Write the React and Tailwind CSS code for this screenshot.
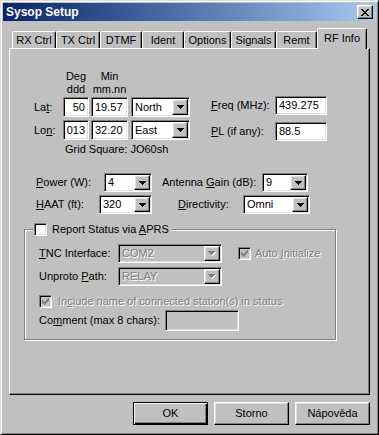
import React from 'react';

// classic 3D borders
const sunken = "border border-t-[#808080] border-l-[#808080] border-b-white border-r-white shadow-[inset_1px_1px_0_#000,inset_-1px_-1px_0_#dfdfdf]";
const raised = "border border-t-white border-l-white border-b-black border-r-black shadow-[inset_-1px_-1px_0_#808080,inset_1px_1px_0_#dfdfdf]";
const dim = "text-[#808080] [text-shadow:1px_1px_0_#fff]";

const ARROW = ["XXXXXXX", ".XXXXX.", "..XXX..", "...X..."];
const CHECK = ["......X", ".....XX", "X...XXX", "XX.XXX.", "XXXXX..", ".XXX...", "..X...."];
const CLOSE = ["XX....XX", ".XX..XX.", "..XXXX..", "...XX...", "..XXXX..", ".XX..XX.", "XX....XX"];

function Pix({ rows, color = "#000", shadow }) {
  const w = rows[0].length + (shadow ? 1 : 0);
  const h = rows.length + (shadow ? 1 : 0);
  const cells = (fill, dx) =>
    rows.flatMap((r, y) =>
      [...r].map((c, x) =>
        c === 'X' ? <rect key={`${fill}-${x}-${y}`} x={x + dx} y={y + dx} width="1" height="1" fill={fill} /> : null
      )
    );
  return (
    <svg width={w} height={h} shapeRendering="crispEdges" className="block">
      {shadow && cells(shadow, 1)}
      {cells(color, 0)}
    </svg>
  );
}

function Edit({ value, className = "", right, disabled }) {
  return (
    <div className={`${sunken} ${disabled ? 'bg-[#c0c0c0]' : 'bg-white'} flex items-center px-[3px] ${right ? 'justify-end' : ''} ${className}`}>
      {value}
    </div>
  );
}

function Combo({ value, className = "", disabled }) {
  return (
    <div className={`${sunken} ${disabled ? 'bg-[#c0c0c0]' : 'bg-white'} flex items-stretch p-[1px] ${className}`}>
      <div className={`flex-1 flex items-center pl-[2px] ${disabled ? dim : ''}`}>{value}</div>
      <div className={`${raised} bg-[#c0c0c0] w-[16px] flex items-center justify-center`}>
        {disabled ? <Pix rows={ARROW} color="#808080" shadow="#fff" /> : <Pix rows={ARROW} />}
      </div>
    </div>
  );
}

function Check({ checked, disabled }) {
  return (
    <div className={`${sunken} ${disabled ? 'bg-[#c0c0c0]' : 'bg-white'} w-[13px] h-[13px] flex items-center justify-center shrink-0`}>
      {checked && <Pix rows={CHECK} color={disabled ? "#808080" : "#000"} />}
    </div>
  );
}

const tabs = [
  ["RX Ctrl", "w-[44px]"],
  ["TX Ctrl", "w-[44px]"],
  ["DTMF", "w-[42px]"],
  ["Ident", "w-[42px]"],
  ["Options", "w-[47px]"],
  ["Signals", "w-[45px]"],
  ["Remt", "w-[41px]"],
];

export default function App() {
  return (
    <div className="w-[379px] h-[435px] bg-[#c0c0c0] p-[2px] border border-t-[#dfdfdf] border-l-[#dfdfdf] border-r-black border-b-black shadow-[inset_1px_1px_0_#fff,inset_-1px_-1px_0_#808080] font-['Liberation_Sans',Arial,sans-serif] text-[11px] text-black leading-[13px] flex flex-col select-none">
      {/* title bar */}
      <div className="h-[18px] bg-linear-to-r from-[#0a246a] to-[#a6caf0] flex items-center pl-[3px] pr-[3px]">
        <span className="text-white font-bold text-[12px] flex-1">Sysop Setup</span>
        <div className={`${raised} bg-[#c0c0c0] w-[16px] h-[14px] flex items-center justify-center`}>
          <Pix rows={CLOSE} />
        </div>
      </div>

      {/* tabs */}
      <div className="mt-[7px] h-[20px] pl-[9px] flex items-end">
        {tabs.map(([t, w]) => (
          <div key={t} className={`${w} h-[17px] border-l border-t border-white border-r border-r-black rounded-t-[2px] shadow-[inset_-1px_0_0_#808080] flex items-center justify-center`}>
            {t}
          </div>
        ))}
        <div className="w-[50px] h-[21px] -mb-px relative z-10 bg-[#c0c0c0] border-l border-t border-white border-r border-r-black rounded-t-[2px] shadow-[inset_-1px_0_0_#808080] flex items-center justify-center pb-[2px]">
          RF Info
        </div>
      </div>

      {/* panel */}
      <div className="ml-[6px] w-[361px] h-[347px] border border-t-white border-l-white border-r-black border-b-black shadow-[inset_-1px_-1px_0_#808080] flex flex-col">
        {/* location + freq */}
        <div className="mt-[21px] flex">
          <div className="ml-[24px] flex flex-col">
            <div className="flex">
              <div className="w-[29px]" />
              <div className="w-[26px] text-center">Deg<br />ddd</div>
              <div className="w-[37px] ml-[2px] text-center">Min<br />mm.nn</div>
            </div>
            <div className="mt-[1px] h-[20px] flex items-center">
              <div className="w-[29px]">La<u>t</u>:</div>
              <Edit value="50" right className="w-[26px] h-[20px]" />
              <Edit value="19.57" className="w-[37px] h-[20px] ml-[2px]" />
              <Combo value="North" className="w-[59px] h-[20px] ml-[3px]" />
            </div>
            <div className="mt-[3px] h-[20px] flex items-center">
              <div className="w-[29px]">Lo<u>n</u>:</div>
              <Edit value="013" right className="w-[26px] h-[20px]" />
              <Edit value="32.20" className="w-[37px] h-[20px] ml-[2px]" />
              <Combo value="East" className="w-[59px] h-[20px] ml-[3px]" />
            </div>
            <div className="mt-[3px] ml-[31px]">Grid Square: JO60sh</div>
          </div>
          <div className="ml-[21px] mt-[26px] flex flex-col">
            <div className="h-[19px] flex items-center">
              <div className="w-[64px]"><u>F</u>req (MHz):</div>
              <Edit value="439.275" className="w-[52px] h-[19px]" />
            </div>
            <div className="mt-[7px] h-[19px] flex items-center">
              <div className="w-[64px]"><u>P</u>L (if any):</div>
              <Edit value="88.5" className="w-[52px] h-[19px]" />
            </div>
          </div>
        </div>

        {/* power / antenna */}
        <div className="mt-[17px] ml-[26px] h-[19px] flex items-center">
          <div className="w-[68px]"><u>P</u>ower (W):</div>
          <Combo value="4" className="w-[48px] h-[19px]" />
          <div className="ml-[10px] w-[100px]">Antenna <u>G</u>ain (dB):</div>
          <Combo value="9" className="w-[46px] h-[19px]" />
        </div>
        <div className="mt-[3px] ml-[26px] h-[19px] flex items-center">
          <div className="w-[63px]"><u>H</u>AAT (ft):</div>
          <Combo value="320" className="w-[53px] h-[19px]" />
          <div className="ml-[26px] w-[65px]"><u>D</u>irectivity:</div>
          <Combo value="Omni" className="w-[67px] h-[19px]" />
        </div>

        {/* APRS group */}
        <div className="relative mt-[15px] ml-[14px] w-[312px] border border-[#808080] shadow-[inset_1px_1px_0_#fff,1px_1px_0_#fff] pl-[14px] pt-[14px] pb-[8px] flex flex-col">
          <div className="absolute -top-[7px] left-[8px] px-[1px] bg-[#c0c0c0] h-[13px] flex items-center">
            <Check />
            <span className="ml-[5px] pr-[2px]">Report Status via <u>A</u>PRS</span>
          </div>
          <div className="h-[19px] flex items-center">
            <div className="w-[79px]"><u>T</u>NC Interface:</div>
            <Combo value="COM2" disabled className="w-[104px] h-[19px]" />
            <div className="ml-[16px]"><Check checked disabled /></div>
            <span className={`ml-[4px] ${dim}`}>Auto <u>I</u>nitialize</span>
          </div>
          <div className="mt-[4px] h-[19px] flex items-center">
            <div className="w-[79px]">Unproto <u>P</u>ath:</div>
            <Combo value="RELAY" disabled className="w-[104px] h-[19px]" />
          </div>
          <div className="mt-[9px] h-[13px] flex items-center">
            <Check checked disabled />
            <span className={`ml-[6px] ${dim}`}>In<u>c</u>lude name of connected station(s) in status</span>
          </div>
          <div className="mt-[2px] h-[21px] flex items-center">
            <div className="w-[126px]">Co<u>m</u>ment (max 8 chars):</div>
            <Edit value="" disabled className="w-[74px] h-[21px]" />
          </div>
        </div>
      </div>

      {/* buttons */}
      <div className="mt-[7px] pr-[6px] flex justify-end gap-[6px]">
        <div className="w-[75px] h-[23px] border border-black shadow-[inset_1px_1px_0_#fff,inset_-1px_-1px_0_#000,inset_-2px_-2px_0_#808080] flex items-center justify-center">OK</div>
        <div className={`${raised} w-[75px] h-[23px] flex items-center justify-center`}>Storno</div>
        <div className={`${raised} w-[75px] h-[23px] flex items-center justify-center`}>Nápověda</div>
      </div>
    </div>
  );
}
